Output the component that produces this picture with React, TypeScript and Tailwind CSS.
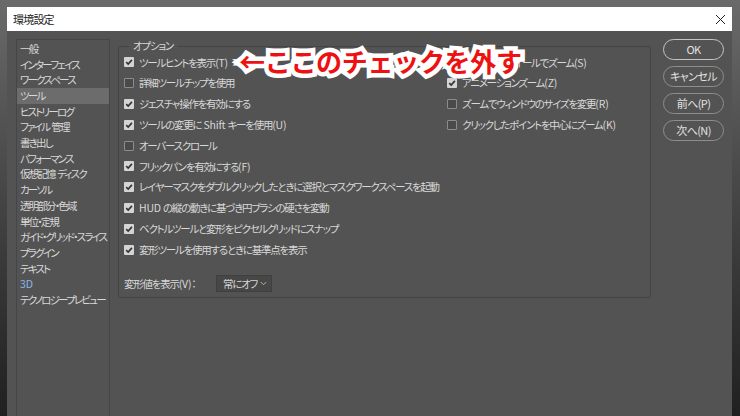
const font = "font-['Noto_Sans_CJK_JP','Noto_Sans',sans-serif] [font-feature-settings:'palt']";

const categories = [
  "一般",
  "インターフェイス",
  "ワークスペース",
  "ツール",
  "ヒストリーログ",
  "ファイル 管理",
  "書き出し",
  "パフォーマンス",
  "仮想記憶 ディスク",
  "カーソル",
  "透明部分・色域",
  "単位・定規",
  "ガイド・グリッド・スライス",
  "プラグイン",
  "テキスト",
  "3D",
  "テクノロジープレビュー",
];

const leftOptions = [
  { label: "ツールヒントを表示(T)", checked: true },
  { label: "詳細ツールチップを使用", checked: false },
  { label: "ジェスチャ操作を有効にする", checked: true },
  { label: "ツールの変更に Shift キーを使用(U)", checked: true },
  { label: "オーバースクロール", checked: false },
  { label: "フリックパンを有効にする(F)", checked: true },
  { label: "レイヤーマスクをダブルクリックしたときに選択とマスクワークスペースを起動", checked: true },
  { label: "HUD の縦の動きに基づき円ブラシの硬さを変動", checked: true },
  { label: "ベクトルツールと変形をピクセルグリッドにスナップ", checked: true },
  { label: "変形ツールを使用するときに基準点を表示", checked: true },
];

const rightOptions = [
  { label: "スクロールホイールでズーム(S)", checked: true },
  { label: "アニメーションズーム(Z)", checked: true },
  { label: "ズームでウィンドウのサイズを変更(R)", checked: false },
  { label: "クリックしたポイントを中心にズーム(K)", checked: false },
];

// latin runs keep normal spacing, japanese runs are tightened
const Label = ({ text }: { text: string }) => (
  <>
    {text.split(/([ -~]+)/).map((part, i) =>
      /^[ -~]+$/.test(part) ? (
        <span key={i} className="tracking-[-0.2px] whitespace-pre">
          {part}
        </span>
      ) : (
        <span key={i}>{part}</span>
      )
    )}
  </>
);

const Check = ({ checked }: { checked: boolean }) =>
  checked ? (
    <span className="w-[10px] h-[10px] rounded-[1px] bg-[#d4d4d4] flex items-center justify-center shrink-0">
      <svg width="8" height="8" viewBox="0 0 8 8">
        <path d="M1.2 4.2 L3.2 6.1 L6.9 1.9" stroke="#333" strokeWidth="1.6" fill="none" />
      </svg>
    </span>
  ) : (
    <span className="w-[10px] h-[10px] rounded-[1px] border border-[#8c8c8c] bg-[#4a4a4a] shrink-0" />
  );

const Option = ({ label, checked }: { label: string; checked: boolean }) => (
  <div className="h-[20.8px] flex items-center gap-[5px] whitespace-nowrap">
    <Check checked={checked} />
    <span>
      <Label text={label} />
    </span>
  </div>
);

const Button = ({ label, primary }: { label: string; primary?: boolean }) => (
  <button
    className={`h-[21px] w-[61px] rounded-full border text-[11px] tracking-[-0.6px] text-[#e2e2e2] ${
      primary ? "border-[#c4c4c4]" : "border-[#8e8e8e]"
    }`}
  >
    {label}
  </button>
);

const App = () => {
  return (
    <div className={`relative w-[740px] h-[416px] overflow-hidden bg-gradient-to-b from-[#6a6a6a] to-[#202020] ${font}`}>
      <div className="flex flex-col h-full ml-[7px] mr-[8px] mt-[7px]">
        {/* title bar */}
        <div className="h-[24px] bg-white flex items-center justify-between pl-[6px] pr-[6px] shrink-0">
          <span className="text-[11px] tracking-[-0.8px] text-[#222]">環境設定</span>
          <svg width="11" height="11" viewBox="0 0 11 11">
            <path d="M1 1 L10 10 M10 1 L1 10" stroke="#222" strokeWidth="1" />
          </svg>
        </div>
        {/* body */}
        <div className="flex-1 bg-[#535353] flex pl-[9px] pt-[8px] text-[10.5px] tracking-[-1.25px] text-[#d8d8d8]">
          <div className="w-[94px] border-l border-t border-r border-[#464646] pt-[1px] tracking-[-1.8px]">
            {categories.map((c) => (
              <div
                key={c}
                className={`h-[15.7px] flex items-center pl-[3px] whitespace-nowrap ${
                  c === "ツール" ? "bg-[#6c6c6c]" : ""
                } ${c === "3D" ? "text-[#8fb4e8] tracking-normal" : ""}`}
              >
                <Label text={c} />
              </div>
            ))}
          </div>
          <div className="ml-[8px] mt-[7px] w-[533px] h-[252px] border border-[#444] rounded-[2px] relative px-[5px] pt-[5px]">
            <span className="absolute -top-[8px] left-[10px] bg-[#535353] px-[4px] leading-[14px]">オプション</span>
            <div className="flex">
              <div className="w-[323px]">
                {leftOptions.map((o) => (
                  <Option key={o.label} {...o} />
                ))}
              </div>
              <div>
                {rightOptions.map((o) => (
                  <Option key={o.label} {...o} />
                ))}
              </div>
            </div>
            <div className="flex items-center mt-[15px] gap-[6px]">
              <span className="w-[86px] whitespace-nowrap">
                <Label text="変形値を表示(V)" />：
              </span>
              <div className="h-[17px] w-[56px] bg-[#474747] border border-[#404040] flex items-center justify-between pl-[6px] pr-[4px] whitespace-nowrap">
                <span>常にオフ</span>
                <svg width="7" height="5" viewBox="0 0 7 5">
                  <path d="M0.8 1 L3.5 3.8 L6.2 1" stroke="#bbb" strokeWidth="0.9" fill="none" />
                </svg>
              </div>
            </div>
          </div>
          <div className="ml-[12px] flex flex-col gap-[6px]">
            <Button label="OK" primary />
            <Button label="キャンセル" />
            <Button label="前へ(P)" />
            <Button label="次へ(N)" />
          </div>
        </div>
      </div>
      {/* annotation */}
      <div className="absolute left-[239px] top-[44px] text-[26px] font-bold leading-[34px] tracking-[-0.3px] whitespace-nowrap [font-feature-settings:normal]">
        <span className="absolute inset-0 text-white [-webkit-text-stroke:9px_white]">←ここのチェックを外す</span>
        <span className="relative text-[#ee1111]">←ここのチェックを外す</span>
      </div>
    </div>
  );
};

export default App;
